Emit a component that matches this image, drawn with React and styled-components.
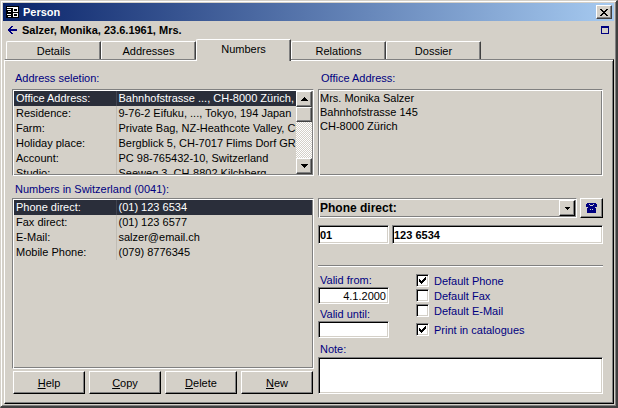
import React from "react";
import styled, { createGlobalStyle, css } from "styled-components";

const FACE = "#d4d0c8";
const NAVY = "#000080";
const GREY = "#808080";

const GlobalStyle = createGlobalStyle`
  * { box-sizing: border-box; }
  body { margin: 0; background: ${FACE}; }
  body, button, input, select, textarea {
    font-family: "Liberation Sans", Arial, sans-serif;
    font-size: 11px;
    color: #000;
  }
  button, input, select, textarea { border-radius: 0; margin: 0; }
`;

const groove = css`
  border: 1px solid ${GREY};
  border-right-color: #fff;
  border-bottom-color: #fff;
  box-shadow: inset 1px 1px #fff, inset -1px -1px ${GREY};
  padding: 1px;
`;

const sunken = css`
  background: #fff;
  border: 1px solid ${GREY};
  border-right-color: #fff;
  border-bottom-color: #fff;
  box-shadow: inset 1px 1px #000, inset -1px -1px ${FACE};
`;

const raised = css`
  background: ${FACE};
  border: 1px solid #fff;
  border-right-color: ${(p) => p.$edge || "#000"};
  border-bottom-color: ${(p) => p.$edge || "#000"};
  box-shadow: inset -1px -1px ${GREY};
  padding: 0;
`;

const Window = styled.main`
  display: flex;
  flex-direction: column;
  min-height: 100vh;
  padding: 1px;
  background: ${FACE};
  border: 1px solid ${FACE};
  border-right: 2px solid #404040;
  border-bottom: 2px solid #404040;
  box-shadow: inset 1px 1px #fff, inset -1px -1px ${GREY};
`;

const TitleBar = styled.header`
  display: flex;
  align-items: center;
  height: 18px;
  margin: 1px 1px 0;
  padding: 0 2px 0 3px;
  gap: 4px;
  background: linear-gradient(90deg, #0a246a, #a6caf0);
`;

const Title = styled.h1`
  flex: 1;
  margin: 0;
  color: #fff;
  font-size: 11px;
  line-height: 18px;
`;

const CloseButton = styled.button`
  ${raised}
  display: grid;
  place-items: center;
  width: 16px;
  height: 14px;
`;

const RecordBar = styled.div`
  display: flex;
  align-items: center;
  height: 18px;
  padding: 0 6px;
  gap: 5px;
`;

const IconButton = styled.button`
  display: grid;
  place-items: center;
  padding: 0;
  border: 0;
  background: none;
`;

const RecordName = styled.h2`
  flex: 1;
  margin: 0;
  font-size: 11px;
  line-height: 18px;
`;

const TabList = styled.div`
  display: flex;
  align-items: flex-end;
  height: 20px;
  padding-left: 4px;
  margin-right: 134px;
  z-index: 1;
`;

const Tab = styled.button`
  flex: 1;
  height: ${(p) => (p.$active ? "22px" : "18px")};
  margin-bottom: ${(p) => (p.$active ? "-2px" : "0")};
  padding: ${(p) => (p.$active ? "0 0 3px" : "0")};
  background: ${FACE};
  border: 1px solid #fff;
  border-right: 1px solid #404040;
  border-bottom: 0;
  border-top-left-radius: 2px;
  border-top-right-radius: 1px;
  box-shadow: inset -1px 0 ${GREY};
`;

const Panel = styled.section`
  flex: 1;
  display: grid;
  grid-template-columns: 302fr 285fr;
  column-gap: 4px;
  margin: 0 1px 1px 2px;
  padding: 9px 10px 9px 7px;
  border-top: 1px solid ${GREY};
  border-left: 1px solid #fff;
  border-right: 1px solid #000;
  border-bottom: 1px solid #000;
  box-shadow: inset 0 1px #fff, inset -1px -1px ${GREY};
`;

const Column = styled.div`
  display: flex;
  flex-direction: column;
  min-width: 0;
`;

const Caption = styled.div`
  height: ${(p) => (p.$second ? "22px" : "20px")};
  padding: ${(p) => (p.$second ? "4px" : "0")} 0 0 3px;
  color: ${NAVY};
  line-height: 18px;
`;

const ListBox = styled.div`
  ${groove}
  display: flex;
  overflow: hidden;
  ${(p) => (p.$grow ? "flex: 1;" : "height: 87px;")}
`;

const ListViewport = styled.div`
  flex: 1;
  min-width: 0;
  overflow: hidden;
`;

const ListTable = styled.table`
  width: 100%;
  table-layout: fixed;
  border-collapse: collapse;
`;

const ListRow = styled.tr`
  height: 15px;
  background: ${(p) => (p.$selected ? "#2a2e3a" : "transparent")};
  color: ${(p) => (p.$selected ? "#fff" : "#000")};
`;

const ListHead = styled.th`
  width: 102px;
  padding: 0 2px;
  border-right: 1px solid ${(p) => (p.$selected ? "#404450" : "#c0bcb4")};
  font-weight: normal;
  text-align: left;
  line-height: 15px;
  white-space: nowrap;
`;

const ListCell = styled.td`
  padding: 0 0 0 2px;
  line-height: 15px;
  white-space: nowrap;
  overflow: hidden;
`;

const ScrollBar = styled.div`
  display: flex;
  flex-direction: column;
  width: 16px;
  background: repeating-conic-gradient(#fff 0 25%, ${FACE} 0 50%) 0 0 / 2px 2px;
`;

const ScrollButton = styled.button`
  ${raised}
  display: grid;
  place-items: center;
  height: 16px;
`;

const ScrollThumb = styled.div`
  ${raised}
  height: 15px;
`;

const ScrollTrack = styled.div`
  flex: 1;
`;

const AddressBox = styled.address`
  ${groove}
  height: 87px;
  font-style: normal;
  line-height: 14px;
`;

const AddressLine = styled.div`
  height: 14px;
`;

const ButtonRow = styled.div`
  display: grid;
  grid-template-columns: repeat(4, 1fr);
  gap: 4px;
  padding: 2px 1px 0;
`;

const CommandButton = styled.button`
  ${raised}
  height: 23px;
`;

const PhoneRow = styled.div`
  display: flex;
  gap: 3px;
  height: 20px;
`;

const Combo = styled.div`
  ${groove}
  position: relative;
  flex: 1;
`;

const ComboSelect = styled.select`
  display: block;
  width: 100%;
  height: 16px;
  padding: 0;
  border: 0;
  outline: 0;
  appearance: none;
  background: transparent;
  font-size: 12px;
  font-weight: bold;
`;

const ComboArrow = styled.span`
  ${raised}
  position: absolute;
  top: 1px;
  right: 1px;
  bottom: 1px;
  width: 16px;
  display: grid;
  place-items: center;
  pointer-events: none;
`;

const DialButton = styled.button`
  ${raised}
  display: grid;
  place-items: center;
  width: 23px;
`;

const NumberRow = styled.div`
  display: grid;
  grid-template-columns: 71px 1fr;
  gap: 3px;
  margin-top: 7px;
`;

const TextField = styled.input`
  ${sunken}
  width: 100%;
  min-width: 0;
  height: ${(p) => (p.$strong ? "19px" : "17px")};
  padding: 0 2px 0 1px;
  font-weight: ${(p) => (p.$strong ? "bold" : "normal")};
  text-align: ${(p) => (p.$right ? "right" : "left")};
`;

const Rule = styled.hr`
  width: 100%;
  margin: 21px 0 6px;
  border: 0;
  border-top: 1px solid ${GREY};
  border-bottom: 1px solid #fff;
`;

const Options = styled.div`
  display: grid;
  grid-template-columns: 71px 1fr;
  column-gap: 27px;
`;

const DateField = styled.label`
  display: block;
  height: 34px;
  color: ${NAVY};
  line-height: 14px;
`;

const FieldLabel = styled.span`
  display: block;
  padding-left: 2px;
`;

const CheckLabel = styled.label`
  display: flex;
  align-items: center;
  gap: 5px;
  height: 15px;
  margin-top: ${(p) => (p.$spaced ? "4px" : "0")};
  color: ${NAVY};
`;

const CheckMark = styled.svg`
  grid-area: 1 / 1;
  visibility: hidden;
  pointer-events: none;
`;

const CheckInput = styled.input`
  ${sunken}
  grid-area: 1 / 1;
  appearance: none;
  width: 13px;
  height: 13px;
  &:checked + ${CheckMark} { visibility: visible; }
`;

const CheckFrame = styled.span`
  display: grid;
  place-items: center;
`;

const NoteField = styled.label`
  flex: 1;
  display: flex;
  flex-direction: column;
  margin-top: 1px;
  color: ${NAVY};
  line-height: 15px;
`;

const NoteText = styled.textarea`
  ${sunken}
  flex: 1;
  width: 100%;
  min-height: 36px;
  padding: 2px;
  resize: none;
`;

const Arrow = ({ up, small }) => (
  <svg width={small ? 5 : 7} height={small ? 3 : 4} viewBox={small ? "0 0 5 3" : "0 0 7 4"} shapeRendering="crispEdges" aria-hidden="true">
    {small ? (
      <path d="M0 0h5v1H4v1H3v1H2V2H1V1H0z" />
    ) : (
      <path d={up ? "M3 0h1v1h1v1h1v1h1v1H0V3h1V2h1V1h1z" : "M0 0h7v1H6v1H5v1H4v1H3V3H2V2H1V1H0z"} />
    )}
  </svg>
);

const FormIcon = () => (
  <svg width="13" height="12" viewBox="0 0 13 12" shapeRendering="crispEdges" aria-hidden="true">
    <rect width="13" height="12" fill="#000" />
    <path fill="#fff" d="M1 1h11v1H1zM1 3h4v1H1zM2 5h3v1H2zM1 8h4v1H1zM2 10h3v1H2zM7 2h5v4H7zM7 7h5v4H7z" />
    <path fill="#000" d="M8 3h3v2H8zM8 8h3v2H8z" />
  </svg>
);

const CloseIcon = () => (
  <svg width="8" height="7" viewBox="0 0 8 7" shapeRendering="crispEdges" aria-hidden="true">
    <path d="M0 0h2v1h1v1h2V1h1V0h2v1H7v1H6v1H5v1h1v1h1v1h1v1H6V6H5V5H3v1H2v1H0V6h1V5h1V4h1V3H2V2H1V1H0z" />
  </svg>
);

const BackIcon = () => (
  <svg width="9" height="8" viewBox="0 0 9 8" shapeRendering="crispEdges" aria-hidden="true">
    <path fill={NAVY} d="M3 0h2v1H4v1H3v1h6v2H3v1h1v1h1v1H3V7H2V6H1V5H0V3h1V2h1V1h1z" />
  </svg>
);

const FrameIcon = () => (
  <svg width="8" height="8" viewBox="0 0 8 8" shapeRendering="crispEdges" aria-hidden="true">
    <path fill={NAVY} fillRule="evenodd" d="M0 0h8v8H0zM1 2v5h6V2z" />
  </svg>
);

const PhoneIcon = () => (
  <svg width="11" height="10" viewBox="0 0 11 10" shapeRendering="crispEdges" aria-hidden="true">
    <path
      fill={NAVY}
      fillRule="evenodd"
      d="M1 0h9v1h1v3H9v1h1v5H1V5h1V4H0V1h1zM3 1v1h1v1h3V2h1V1H7v1H4V1zM4 6v1h1V6zM6 6v1h1V6z"
    />
  </svg>
);

const TABS = ["Details", "Addresses", "Numbers", "Relations", "Dossier"];

const ADDRESSES = [
  ["Office Address:", "Bahnhofstrasse ..., CH-8000 Zürich,"],
  ["Residence:", "9-76-2 Eifuku, ..., Tokyo, 194 Japan"],
  ["Farm:", "Private Bag, NZ-Heathcote Valley, CH"],
  ["Holiday place:", "Bergblick 5, CH-7017 Flims Dorf GR"],
  ["Account:", "PC 98-765432-10, Switzerland"],
  ["Studio:", "Seeweg 3, CH-8802 Kilchberg"],
];

const NUMBERS = [
  ["Phone direct:", "(01) 123 6534"],
  ["Fax direct:", "(01) 123 6577"],
  ["E-Mail:", "salzer@email.ch"],
  ["Mobile Phone:", "(079) 8776345"],
];

const OFFICE_ADDRESS = ["Mrs. Monika Salzer", "Bahnhofstrasse 145", "CH-8000 Zürich"];

const COMMANDS = ["Help", "Copy", "Delete", "New"];

const Listing = ({ rows, label }) => (
  <ListViewport>
    <ListTable aria-label={label}>
      <tbody>
        {rows.map(([name, value], i) => (
          <ListRow key={name} $selected={i === 0}>
            <ListHead scope="row" $selected={i === 0}>{name}</ListHead>
            <ListCell>{value}</ListCell>
          </ListRow>
        ))}
      </tbody>
    </ListTable>
  </ListViewport>
);

const Check = ({ label, spaced, checked }) => (
  <CheckLabel $spaced={spaced}>
    <CheckFrame>
      <CheckInput type="checkbox" defaultChecked={checked} />
      <CheckMark width="7" height="7" viewBox="0 0 7 7" shapeRendering="crispEdges" aria-hidden="true">
        <path d="M0 2h1v1h1v1h1V3h1V2h1V1h1V0h1v3H6v1H5v1H4v1H3v1H2V6H1V5H0z" />
      </CheckMark>
    </CheckFrame>
    {label}
  </CheckLabel>
);

export default function App() {
  return (
    <>
      <GlobalStyle />
      <Window>
        <TitleBar>
          <FormIcon />
          <Title>Person</Title>
          <CloseButton aria-label="Close" $edge="#404040"><CloseIcon /></CloseButton>
        </TitleBar>
        <RecordBar>
          <IconButton aria-label="Back"><BackIcon /></IconButton>
          <RecordName>Salzer, Monika, 23.6.1961, Mrs.</RecordName>
          <IconButton aria-label="Maximize"><FrameIcon /></IconButton>
        </RecordBar>
        <TabList role="tablist">
          {TABS.map((name) => (
            <Tab key={name} role="tab" aria-selected={name === "Numbers"} $active={name === "Numbers"}>
              {name}
            </Tab>
          ))}
        </TabList>
        <Panel>
          <Column>
            <Caption>Address seletion:</Caption>
            <ListBox>
              <Listing rows={ADDRESSES} label="Addresses" />
              <ScrollBar>
                <ScrollButton aria-label="Scroll up" $edge="#404040"><Arrow up /></ScrollButton>
                <ScrollThumb $edge="#404040" />
                <ScrollTrack />
                <ScrollButton aria-label="Scroll down" $edge="#404040"><Arrow /></ScrollButton>
              </ScrollBar>
            </ListBox>
            <Caption $second>Numbers in Switzerland (0041):</Caption>
            <ListBox $grow>
              <Listing rows={NUMBERS} label="Numbers" />
            </ListBox>
            <ButtonRow>
              {COMMANDS.map((name) => (
                <CommandButton key={name}>
                  <u>{name[0]}</u>{name.slice(1)}
                </CommandButton>
              ))}
            </ButtonRow>
          </Column>
          <Column>
            <Caption>Office Address:</Caption>
            <AddressBox>
              {OFFICE_ADDRESS.map((line) => <AddressLine key={line}>{line}</AddressLine>)}
            </AddressBox>
            <Caption $second />
            <PhoneRow>
              <Combo>
                <ComboSelect aria-label="Number type" defaultValue="Phone direct:">
                  {NUMBERS.map(([name]) => <option key={name}>{name}</option>)}
                </ComboSelect>
                <ComboArrow><Arrow small /></ComboArrow>
              </Combo>
              <DialButton aria-label="Dial"><PhoneIcon /></DialButton>
            </PhoneRow>
            <NumberRow>
              <TextField $strong aria-label="Area code" defaultValue="01" />
              <TextField $strong aria-label="Number" defaultValue="123 6534" />
            </NumberRow>
            <Rule />
            <Options>
              <div>
                <DateField>
                  <FieldLabel>Valid from:</FieldLabel>
                  <TextField $right defaultValue="4.1.2000" />
                </DateField>
                <DateField>
                  <FieldLabel>Valid until:</FieldLabel>
                  <TextField $right defaultValue="" />
                </DateField>
              </div>
              <div>
                <Check label="Default Phone" checked />
                <Check label="Default Fax" />
                <Check label="Default E-Mail" />
                <Check label="Print in catalogues" spaced checked />
              </div>
            </Options>
            <NoteField>
              <FieldLabel>Note:</FieldLabel>
              <NoteText />
            </NoteField>
          </Column>
        </Panel>
      </Window>
    </>
  );
}
